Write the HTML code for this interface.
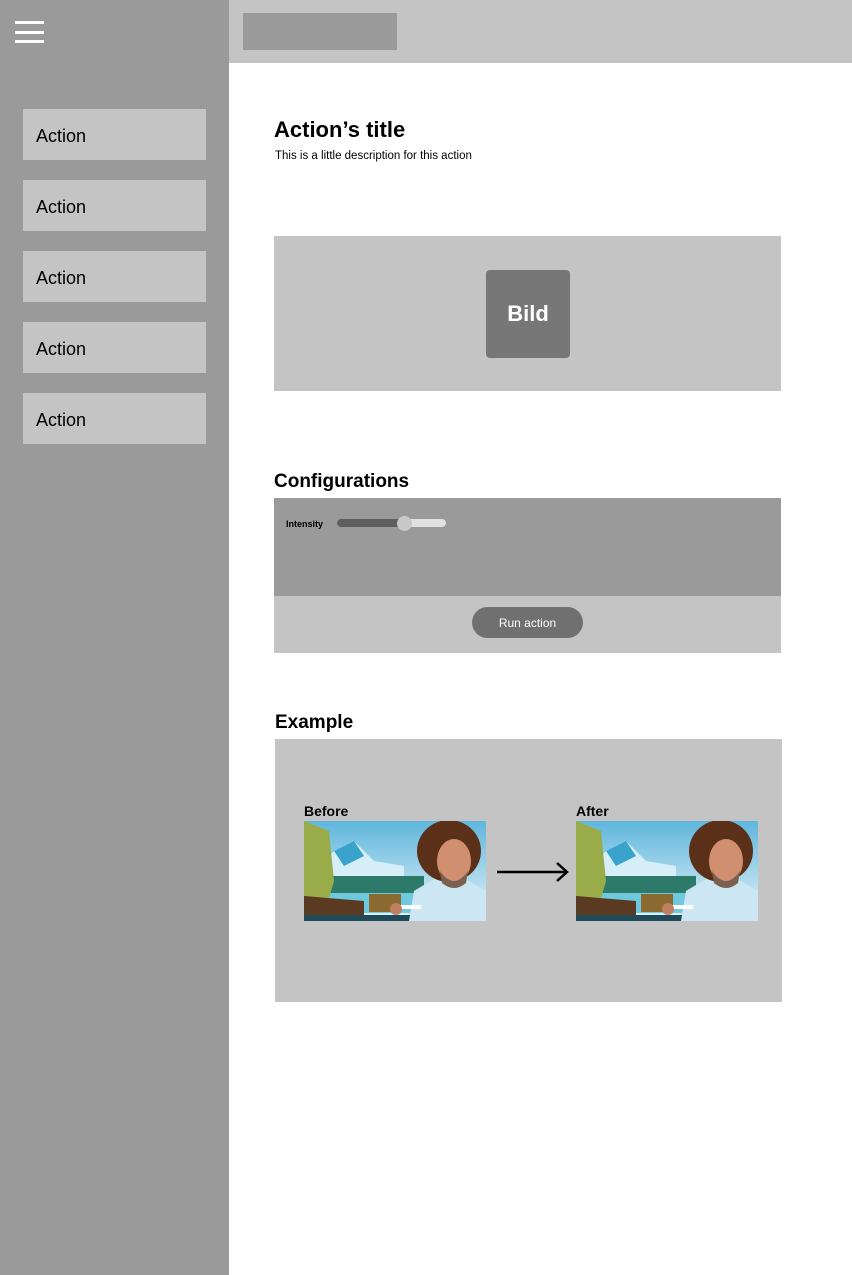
<!DOCTYPE html>
<html><head><meta charset="utf-8"><style>
*{margin:0;padding:0;box-sizing:border-box}
body{width:852px;height:1275px;position:relative;background:#fff;font-family:"Liberation Sans",Arial,sans-serif;overflow:hidden}
.a{position:absolute}
.side{left:0;top:0;width:229px;height:1275px;background:#9a9a9a}
.bar{left:15px;width:29px;height:3px;background:#fff}
.act{left:23px;width:183px;height:51px;background:#c4c4c4;font-size:18px;color:#000;padding-left:13px;line-height:54px}
h2{font-weight:bold;color:#000;position:absolute}
</style></head><body>
<div class="a side"></div>
<div class="a bar" style="top:21px"></div>
<div class="a bar" style="top:31px"></div>
<div class="a bar" style="top:40px"></div>
<div class="a act" style="top:109px">Action</div>
<div class="a act" style="top:180px">Action</div>
<div class="a act" style="top:251px">Action</div>
<div class="a act" style="top:322px">Action</div>
<div class="a act" style="top:393px">Action</div>
<div class="a" style="left:229px;top:0;width:623px;height:63px;background:#c4c4c4"></div>
<div class="a" style="left:243px;top:13px;width:154px;height:37px;background:#9a9a9a"></div>
<h2 style="left:274px;top:117px;font-size:22px">Action’s title</h2>
<div class="a" style="left:275px;top:150px;font-size:11.5px">This is a little description for this action</div>
<div class="a" style="left:274px;top:236px;width:507px;height:155px;background:#c4c4c4"></div>
<div class="a" style="left:486px;top:270px;width:84px;height:88px;background:#777;border-radius:4px;color:#fff;font-weight:bold;font-size:22px;text-align:center;line-height:88px">Bild</div>
<h2 style="left:274px;top:471px;font-size:19px">Configurations</h2>
<div class="a" style="left:274px;top:498px;width:507px;height:98px;background:#9a9a9a"></div>
<div class="a" style="left:286px;top:519px;font-size:9px;font-weight:bold">Intensity</div>
<div class="a" style="left:337px;top:519px;width:109px;height:8px;border-radius:4px;background:#e0e0e0"></div>
<div class="a" style="left:337px;top:519px;width:68px;height:8px;border-radius:4px;background:#5e5e5e"></div>
<div class="a" style="left:397px;top:516px;width:15px;height:15px;border-radius:50%;background:#c8c8c8"></div>
<div class="a" style="left:274px;top:596px;width:507px;height:57px;background:#c4c4c4"></div>
<div class="a" style="left:472px;top:607px;width:111px;height:31px;border-radius:16px;background:#707070;color:#fff;font-size:12px;text-align:center;line-height:33px">Run action</div>
<h2 style="left:275px;top:712px;font-size:19px">Example</h2>
<div class="a" style="left:275px;top:739px;width:507px;height:263px;background:#c4c4c4"></div>
<div class="a" style="left:304px;top:803px;font-size:14px;font-weight:bold">Before</div>
<div class="a" style="left:576px;top:803px;font-size:14px;font-weight:bold">After</div>
<svg class="a" style="left:304px;top:821px" width="182" height="100" viewBox="0 0 182 100">
<defs><linearGradient id="s" x1="0" y1="0" x2="0" y2="1"><stop offset="0" stop-color="#5fb6dc"/><stop offset="1" stop-color="#e6f4fa"/></linearGradient></defs>
<rect width="182" height="100" fill="url(#s)"/>
<polygon points="0,60 30,30 50,20 70,40 100,45 100,70 0,70" fill="#d6eef8"/>
<polygon points="30,30 50,20 60,35 40,45" fill="#3aa3cc"/>
<rect x="0" y="55" width="120" height="20" fill="#2e7a6a"/>
<rect x="20" y="72" width="110" height="20" fill="#6ec8de"/>
<polygon points="0,0 25,10 30,60 20,95 0,95" fill="#9aac4a"/>
<polygon points="0,75 60,80 60,100 0,100" fill="#5a3a20"/>
<rect x="65" y="73" width="32" height="18" fill="#8a6a30"/>
<rect x="0" y="94" width="182" height="6" fill="#1e4a5a"/>
<polygon points="110,70 135,55 165,60 182,70 182,100 105,100" fill="#cde6f4"/>
<ellipse cx="145" cy="30" rx="32" ry="31" fill="#5a3018"/>
<ellipse cx="150" cy="40" rx="17" ry="22" fill="#d09070"/>
<path d="M136 50 Q150 70 164 50 L162 62 Q150 72 138 62Z" fill="#7a6050"/>
<rect x="95" y="84" width="22" height="4" fill="#fff"/>
<circle cx="92" cy="88" r="6" fill="#c08060"/>
</svg>
<svg class="a" style="left:576px;top:821px" width="182" height="100" viewBox="0 0 182 100">
<rect width="182" height="100" fill="url(#s)"/>
<polygon points="0,60 30,30 50,20 70,40 100,45 100,70 0,70" fill="#d6eef8"/>
<polygon points="30,30 50,20 60,35 40,45" fill="#3aa3cc"/>
<rect x="0" y="55" width="120" height="20" fill="#2e7a6a"/>
<rect x="20" y="72" width="110" height="20" fill="#6ec8de"/>
<polygon points="0,0 25,10 30,60 20,95 0,95" fill="#9aac4a"/>
<polygon points="0,75 60,80 60,100 0,100" fill="#5a3a20"/>
<rect x="65" y="73" width="32" height="18" fill="#8a6a30"/>
<rect x="0" y="94" width="182" height="6" fill="#1e4a5a"/>
<polygon points="110,70 135,55 165,60 182,70 182,100 105,100" fill="#cde6f4"/>
<ellipse cx="145" cy="30" rx="32" ry="31" fill="#5a3018"/>
<ellipse cx="150" cy="40" rx="17" ry="22" fill="#d09070"/>
<path d="M136 50 Q150 70 164 50 L162 62 Q150 72 138 62Z" fill="#7a6050"/>
<rect x="95" y="84" width="22" height="4" fill="#fff"/>
<circle cx="92" cy="88" r="6" fill="#c08060"/>
</svg>
<svg class="a" style="left:495px;top:860px" width="76" height="24"><path d="M2 12H72M62 3L72 12L62 21" stroke="#000" stroke-width="2.5" fill="none"/></svg>
</body></html>
